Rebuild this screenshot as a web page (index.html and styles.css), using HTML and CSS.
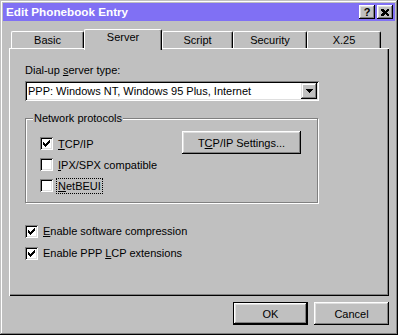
FILE: index.html
```html
<!DOCTYPE html>
<html lang="en">
<head>
    <meta charset="UTF-8">
    <title>Edit Phonebook Entry</title>
    <link rel="stylesheet" href="styles.css">
</head>
<body>
    <div class="window">
        <div class="titlebar">
            <span class="title">Edit Phonebook Entry</span>
            <div class="title-buttons">
                <button class="tbtn">?</button>
                <button class="tbtn">
                    <svg width="8" height="7" viewBox="0 0 8 7" shape-rendering="crispEdges">
                        <path d="M0 0h2l2 2 2-2h2v1l-2 2.5 2 2.5v1h-2l-2-2-2 2h-2v-1l2-2.5-2-2.5z" fill="#000"/>
                    </svg>
                </button>
            </div>
        </div>

        <div class="body">
            <div class="tabs">
                <div class="tab tab-basic">Basic</div>
                <div class="tab tab-server tab-active">Server</div>
                <div class="tab tab-script">Script</div>
                <div class="tab tab-security">Security</div>
                <div class="tab tab-x25">X.25</div>
            </div>

            <div class="panel">
                <div class="label">Dial-up <u>s</u>erver type:</div>
                <div class="select">
                    <span class="select-text">PPP: Windows NT, Windows 95 Plus, Internet</span>
                    <span class="select-btn">
                        <svg width="7" height="4" viewBox="0 0 7 4" shape-rendering="crispEdges">
                            <path d="M0 0h7v1h-1v1h-1v1h-1v1h-1v-1h-1v-1h-1v-1h-1z" fill="#000"/>
                        </svg>
                    </span>
                </div>

                <div class="group">
                    <span class="group-title">Network protocols</span>
                    <div class="group-row">
                        <div class="checks">
                            <div class="check">
                                <span class="box">
                                    <svg width="7" height="7" viewBox="0 0 7 7" shape-rendering="crispEdges">
                                        <path d="M6 0h1v3h-1v1h-1v1h-1v1h-1v1h-1v-1h-1v-1h-1v-3h1v1h1v1h1v-1h1v-1h1z" fill="#000"/>
                                    </svg>
                                </span>
                                <span><u>T</u>CP/IP</span>
                            </div>
                            <div class="check">
                                <span class="box"></span>
                                <span><u>I</u>PX/SPX compatible</span>
                            </div>
                            <div class="check">
                                <span class="box"></span>
                                <span class="focus"><u>N</u>etBEUI</span>
                            </div>
                        </div>
                        <button class="btn btn-settings">T<u>C</u>P/IP Settings...</button>
                    </div>
                </div>

                <div class="options">
                    <div class="check option">
                        <span class="box">
                            <svg width="7" height="7" viewBox="0 0 7 7" shape-rendering="crispEdges">
                                <path d="M6 0h1v3h-1v1h-1v1h-1v1h-1v1h-1v-1h-1v-1h-1v-3h1v1h1v1h1v-1h1v-1h1z" fill="#000"/>
                            </svg>
                        </span>
                        <span><u>E</u>nable software compression</span>
                    </div>
                    <div class="check option">
                        <span class="box">
                            <svg width="7" height="7" viewBox="0 0 7 7" shape-rendering="crispEdges">
                                <path d="M6 0h1v3h-1v1h-1v1h-1v1h-1v1h-1v-1h-1v-1h-1v-3h1v1h1v1h1v-1h1v-1h1z" fill="#000"/>
                            </svg>
                        </span>
                        <span>Enable PPP <u>L</u>CP extensions</span>
                    </div>
                </div>
            </div>

            <div class="actions">
                <button class="btn btn-default">OK</button>
                <button class="btn">Cancel</button>
            </div>
        </div>
    </div>
</body>
</html>
```

FILE: styles.css
```css
body {
    margin: 0;
    background-color: #c0c0c0;
    font-family: "Liberation Sans", Arial, sans-serif;
    font-size: 11px;
    color: #000;
}

button {
    font: inherit;
    color: #000;
    margin: 0;
    padding: 0;
    border: 0;
    background-color: #c0c0c0;
}

u {
    text-decoration-thickness: 1px;
    text-underline-offset: 1px;
}

.window {
    width: 398px;
    height: 335px;
    box-sizing: border-box;
    padding: 3px;
    background-color: #c0c0c0;
    box-shadow: inset -1px -1px #000, inset 1px 1px #c0c0c0, inset -2px -2px #808080, inset 2px 2px #fff;
    display: flex;
    flex-direction: column;
}

/* title bar */
.titlebar {
    height: 18px;
    box-sizing: border-box;
    background-color: #8070f4;
    color: #fff;
    display: flex;
    align-items: center;
    justify-content: space-between;
    padding-left: 3px;
    padding-right: 2px;
}

.title {
    font-weight: bold;
    font-size: 11.7px;
    margin-top: -1px;
}

.title-buttons {
    display: flex;
    gap: 2px;
}

.tbtn {
    width: 16px;
    height: 14px;
    font-weight: bold;
    font-size: 11px;
    line-height: 12px;
    display: flex;
    align-items: center;
    justify-content: center;
    box-shadow: inset -1px -1px #000, inset 1px 1px #fff, inset -2px -2px #808080, inset 2px 2px #dfdfdf;
}

/* tabs */
.body {
    flex: 1;
    padding: 8px 6px 0;
    display: flex;
    flex-direction: column;
}

.tabs {
    height: 19px;
    display: flex;
    align-items: flex-end;
    padding-left: 2px;
}

.tab {
    box-sizing: border-box;
    height: 17px;
    padding-top: 2px;
    text-align: center;
    line-height: 13px;
    background-color: #c0c0c0;
    border-top: 1px solid #fff;
    border-left: 1px solid #fff;
    border-right: 1px solid #000;
    border-radius: 2px 2px 0 0;
    box-shadow: inset -1px 0 #808080;
}

.tab-active {
    height: 21px;
    margin-bottom: -2px;
    padding-top: 1px;
    position: relative;
    z-index: 1;
}

.tab-basic { width: 73px; }
.tab-server { width: 78px; }
.tab-script { width: 71px; }
.tab-security { width: 74px; }
.tab-x25 { width: 74px; }

.panel {
    height: 248px;
    box-sizing: border-box;
    padding: 16px 16px 0;
    box-shadow: inset 1px 1px #fff, inset -1px -1px #000, inset -2px -2px #808080;
}

.label {
    line-height: 13px;
}

/* dropdown */
.select {
    margin-top: 4px;
    width: 294px;
    height: 20px;
    box-sizing: border-box;
    padding: 2px 2px 2px 3px;
    background-color: #fff;
    box-shadow: inset 1px 1px #808080, inset -1px -1px #fff, inset 2px 2px #000, inset -2px -2px #dfdfdf;
    display: flex;
    align-items: center;
}

.select-text {
    flex: 1;
}

.select-btn {
    width: 16px;
    height: 16px;
    background-color: #c0c0c0;
    box-shadow: inset -1px -1px #000, inset 1px 1px #dfdfdf, inset -2px -2px #808080, inset 2px 2px #fff;
    display: flex;
    align-items: center;
    justify-content: center;
}

/* group box */
.group {
    position: relative;
    margin-top: 17px;
    width: 293px;
    box-sizing: border-box;
    border: 1px solid #808080;
    box-shadow: 1px 1px #fff, inset 1px 1px #fff;
    padding: 14px 0 6px 14px;
}

.group-title {
    position: absolute;
    top: -7px;
    left: 7px;
    padding: 0 1px;
    line-height: 13px;
    background-color: #c0c0c0;
}

.group-row {
    display: flex;
    align-items: flex-start;
}

.checks {
    flex: 1;
}

.check {
    height: 21px;
    display: flex;
    align-items: center;
    gap: 5px;
}

.box {
    width: 13px;
    height: 13px;
    box-sizing: border-box;
    background-color: #fff;
    box-shadow: inset 1px 1px #808080, inset -1px -1px #fff, inset 2px 2px #000, inset -2px -2px #dfdfdf;
    display: flex;
    align-items: center;
    justify-content: center;
}

.focus {
    outline: 1px dotted #000;
    outline-offset: 1px;
}

.options {
    margin-top: 17px;
}

.option {
    height: 22px;
}

/* push buttons */
.btn {
    width: 75px;
    height: 23px;
    box-sizing: border-box;
    box-shadow: inset -1px -1px #000, inset 1px 1px #fff, inset -2px -2px #808080, inset 2px 2px #dfdfdf;
}

.btn-settings {
    width: 119px;
    margin-top: -2px;
    margin-right: 16px;
}

.btn-default {
    border: 1px solid #000;
}

.actions {
    margin-top: 6px;
    display: flex;
    justify-content: flex-end;
    gap: 6px;
}
```
